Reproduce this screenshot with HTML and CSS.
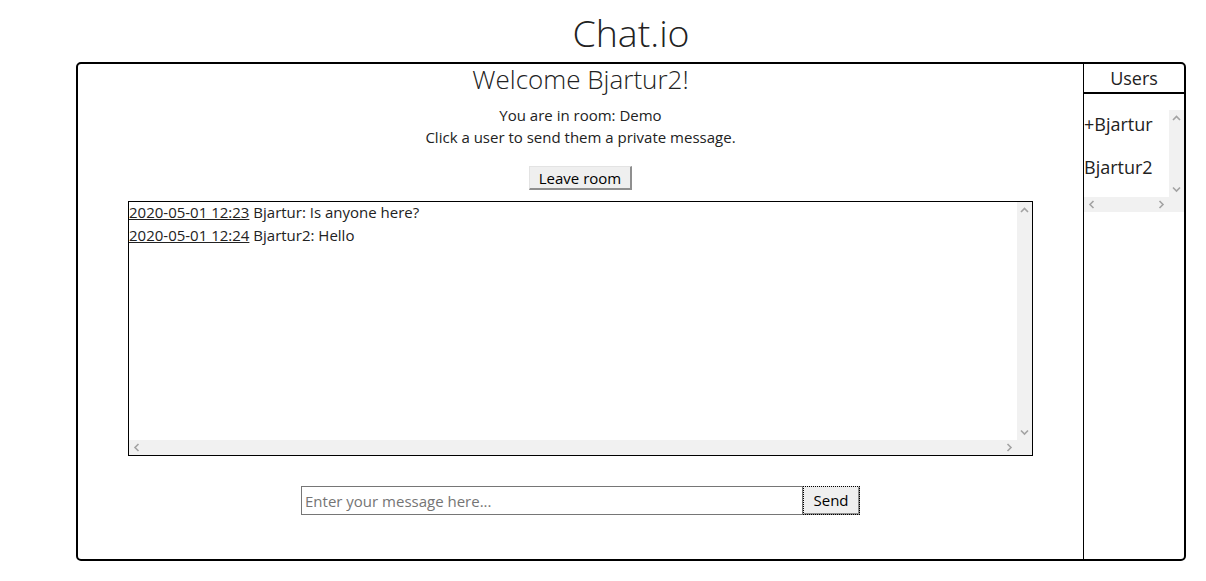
FILE: index.html
```html
<!DOCTYPE html>
<html lang="en">
<head>
<meta charset="utf-8">
<title>Chat.io</title>
<link rel="stylesheet" href="styles.css">
</head>
<body>
<div class="page">
  <h1 class="title">Chat.io</h1>
  <div class="frame">
    <main class="room">
      <h2 class="welcome">Welcome Bjartur2!</h2>
      <p class="info">You are in room: Demo<br>Click a user to send them a private message.</p>
      <button class="btn leave" type="button">Leave room</button>
      <div class="scrollbox chat">
        <div class="scroll-content">
          <div class="msg"><a class="time" href="#">2020-05-01 12:23</a> Bjartur: Is anyone here?</div>
          <div class="msg"><a class="time" href="#">2020-05-01 12:24</a> Bjartur2: Hello</div>
        </div>
        <div class="vbar">
          <span class="arrow"><svg width="15" height="15" viewBox="0 0 15 15"><polyline points="4,10 7.5,6.5 11,10" fill="none" stroke="#a3a3a3" stroke-width="1.6"/></svg></span>
          <span class="track"></span>
          <span class="arrow"><svg width="15" height="15" viewBox="0 0 15 15"><polyline points="4,5.5 7.5,9 11,5.5" fill="none" stroke="#a3a3a3" stroke-width="1.6"/></svg></span>
          <span class="corner"></span>
        </div>
        <div class="hbar">
          <span class="arrow"><svg width="15" height="15" viewBox="0 0 15 15"><polyline points="9.5,4 6,7.5 9.5,11" fill="none" stroke="#a3a3a3" stroke-width="1.6"/></svg></span>
          <span class="track"></span>
          <span class="arrow"><svg width="15" height="15" viewBox="0 0 15 15"><polyline points="5.5,4 9,7.5 5.5,11" fill="none" stroke="#a3a3a3" stroke-width="1.6"/></svg></span>
        </div>
      </div>
      <form class="send-form" onsubmit="return false">
        <input class="msg-input" type="text" placeholder="Enter your message here...">
        <button class="btn send" type="submit">Send</button>
      </form>
    </main>
    <aside class="users">
      <div class="users-head">Users</div>
      <div class="scrollbox userlist">
        <ul class="scroll-content user-items">
          <li class="user">+Bjartur</li>
          <li class="user">Bjartur2</li>
        </ul>
        <div class="vbar">
          <span class="arrow"><svg width="15" height="15" viewBox="0 0 15 15"><polyline points="4,10 7.5,6.5 11,10" fill="none" stroke="#a3a3a3" stroke-width="1.6"/></svg></span>
          <span class="track"></span>
          <span class="arrow"><svg width="15" height="15" viewBox="0 0 15 15"><polyline points="4,5.5 7.5,9 11,5.5" fill="none" stroke="#a3a3a3" stroke-width="1.6"/></svg></span>
          <span class="corner"></span>
        </div>
        <div class="hbar">
          <span class="arrow"><svg width="15" height="15" viewBox="0 0 15 15"><polyline points="9.5,4 6,7.5 9.5,11" fill="none" stroke="#a3a3a3" stroke-width="1.6"/></svg></span>
          <span class="track"></span>
          <span class="arrow"><svg width="15" height="15" viewBox="0 0 15 15"><polyline points="5.5,4 9,7.5 5.5,11" fill="none" stroke="#a3a3a3" stroke-width="1.6"/></svg></span>
        </div>
      </div>
    </aside>
  </div>
</div>
</body>
</html>
```

FILE: styles.css
```css
* { box-sizing: border-box; }

html, body {
  margin: 0;
  padding: 0;
  background: #fff;
}

body {
  font-family: "Open Sans", "Liberation Sans", sans-serif;
  color: #222;
  font-size: 15px;
}

.page {
  width: 1110px;
  margin-left: 76px;
  padding-top: 8px;
}

.title {
  margin: 0 0 5px;
  font-size: 37.5px;
  font-weight: 300;
  line-height: 49px;
  text-align: center;
  color: #222;
}

.frame {
  display: flex;
  height: 499px;
  border: 2px solid #000;
  border-radius: 5px;
}

.room {
  flex: 1;
  display: flex;
  flex-direction: column;
  align-items: center;
  border-right: 1px solid #000;
}

.welcome {
  margin: 0;
  font-size: 26px;
  font-weight: 300;
  line-height: 30px;
}

.info {
  margin: 10px 0 0;
  line-height: 22px;
  text-align: center;
}

.btn {
  font-family: "Open Sans", "Liberation Sans", sans-serif;
  font-size: 15px;
  line-height: 20px;
  color: #000;
  background: #efefef;
  border-style: solid;
  border-width: 1px 2px 2px 1px;
  border-color: #e3e3e3 #8f8f8f #8f8f8f #e3e3e3;
  border-radius: 0;
}

.leave {
  margin-top: 18px;
  height: 24px;
  padding: 0 9px;
}

.scrollbox {
  display: grid;
  grid-template-columns: 1fr 15px;
  grid-template-rows: 1fr 15px;
  overflow: hidden;
}

.scroll-content {
  grid-column: 1;
  grid-row: 1;
  overflow: hidden;
}

.vbar {
  grid-column: 2;
  grid-row: 1 / 3;
  display: flex;
  flex-direction: column;
  background: #f1f1f1;
}

.hbar {
  grid-column: 1;
  grid-row: 2;
  display: flex;
  background: #f1f1f1;
}

.arrow {
  display: block;
  width: 15px;
  height: 15px;
  flex: none;
}

.arrow svg { display: block; }

.track { flex: 1; }

.corner {
  display: block;
  width: 15px;
  height: 15px;
  flex: none;
}

.chat {
  margin-top: 11px;
  width: 905px;
  height: 255px;
  border: 1px solid #000;
}

.msg {
  line-height: 21px;
  margin-bottom: 2px;
  white-space: nowrap;
}

.time {
  color: #222;
  text-decoration: underline;
}

.send-form {
  margin: 30px 0 0;
  display: flex;
}

.msg-input {
  width: 502px;
  height: 29px;
  border: 1px solid #767676;
  padding: 0 3px;
  font-family: "Open Sans", "Liberation Sans", sans-serif;
  font-size: 15px;
  color: #222;
  outline: none;
}

.msg-input::placeholder { color: #757575; }

.send {
  width: 57px;
  height: 29px;
  padding: 0;
  outline: 1px dotted #000;
  outline-offset: -1px;
}

.users {
  width: 100px;
  display: flex;
  flex-direction: column;
}

.users-head {
  height: 30px;
  line-height: 28px;
  font-size: 18px;
  text-align: center;
  border-bottom: 2px solid #000;
}

.userlist {
  margin-top: 16px;
  height: 102px;
}

.user-items {
  list-style: none;
  margin: 0;
  padding: 2px 0 0;
}

.user {
  font-size: 18px;
  line-height: 24.5px;
  margin-bottom: 18px;
  white-space: nowrap;
}
```
